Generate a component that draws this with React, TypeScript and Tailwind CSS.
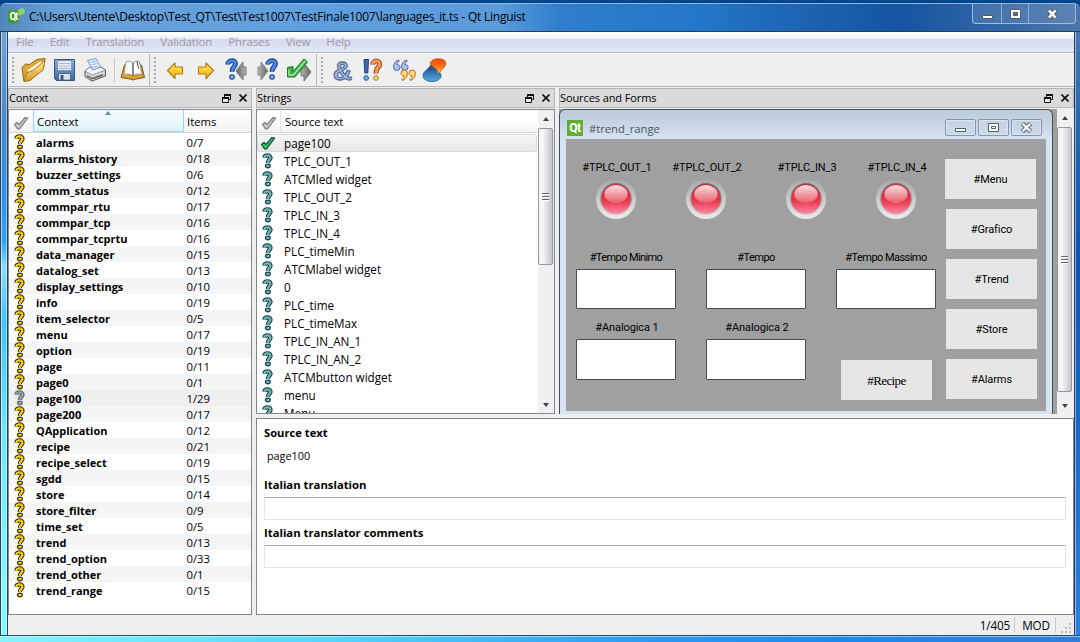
import React from "react";

type Kids = { children?: React.ReactNode };

const contexts: [string, string][] = [
  ["alarms", "0/7"], ["alarms_history", "0/18"], ["buzzer_settings", "0/6"], ["comm_status", "0/12"],
  ["commpar_rtu", "0/17"], ["commpar_tcp", "0/16"], ["commpar_tcprtu", "0/16"], ["data_manager", "0/15"],
  ["datalog_set", "0/13"], ["display_settings", "0/10"], ["info", "0/19"], ["item_selector", "0/5"],
  ["menu", "0/17"], ["option", "0/19"], ["page", "0/11"], ["page0", "0/1"], ["page100", "1/29"],
  ["page200", "0/17"], ["QApplication", "0/12"], ["recipe", "0/21"], ["recipe_select", "0/19"],
  ["sgdd", "0/15"], ["store", "0/14"], ["store_filter", "0/9"], ["time_set", "0/5"], ["trend", "0/13"],
  ["trend_option", "0/33"], ["trend_other", "0/1"], ["trend_range", "0/15"],
];

const strings = [
  "page100", "TPLC_OUT_1", "ATCMled widget", "TPLC_OUT_2", "TPLC_IN_3", "TPLC_IN_4", "PLC_timeMin",
  "ATCMlabel widget", "0", "PLC_time", "PLC_timeMax", "TPLC_IN_AN_1", "TPLC_IN_AN_2",
  "ATCMbutton widget", "menu", "Menu",
];

const hook = "M2.4 4.8C2.8 1.4 8.8 1.6 8.4 5C8.200 7 5.800 7 5.800 10";

function Question({ fill, edge }: { fill: string; edge: string }) {
  return (
    <svg width="12" height="16" viewBox="0 0 12 16" className="block shrink-0">
      <path d={hook} fill="none" stroke={edge} strokeWidth="4.4" />
      <ellipse cx="5.9" cy="13" rx="3" ry="2.400" fill={edge} />
      <path d={hook} fill="none" stroke={fill} strokeWidth="2.200" />
      <ellipse cx="5.9" cy="13" rx="1.900" ry="1.300" fill={fill} />
    </svg>
  );
}

function Tick({ fill, edge }: { fill: string; edge: string }) {
  return (
    <svg width="16" height="14" viewBox="0 0 16 14" className="block shrink-0">
      <path d="M1.5 8.5L4 6.5L6 8.7L12 1.5L14.6 2.2L6.5 12.8L4.5 12.8Z" fill={fill} stroke={edge} strokeWidth="1.2" strokeLinejoin="round" />
    </svg>
  );
}

function FloatIcon() {
  return (
    <svg width="9" height="9" viewBox="0 0 9 9" className="block">
      <path d="M2.5 3V.5h6v5H6.5" fill="none" stroke="#111" />
      <path d="M2 1h7" stroke="#111" strokeWidth="2" />
      <path d="M.5 4.5h6v4h-6z" fill="#eee" stroke="#111" />
      <path d="M0 4h7" stroke="#111" strokeWidth="2" />
    </svg>
  );
}

function CloseIcon() {
  return (
    <svg width="8" height="8" viewBox="0 0 8 8" className="block">
      <path d="M.5.5l7 7M7.5.5l-7 7" stroke="#111" strokeWidth="1.6" />
    </svg>
  );
}

function DockTitle({ title }: { title: string }) {
  return (
    <div className="flex h-[20px] shrink-0 items-center border border-[#b6b6b6] bg-[#dadada] pr-[4px] text-[11px] tracking-[-0.1px] text-black">
      <span className="flex-1">{title}</span>
      <span className="flex items-center gap-[8px]">
        <FloatIcon />
        <CloseIcon />
      </span>
    </div>
  );
}

function Grip() {
  return (
    <svg width="3" height="28" viewBox="0 0 3 28" className="block shrink-0">
      <path d="M1 1v26" stroke="#aaa" strokeWidth="2" strokeDasharray="2 2" />
    </svg>
  );
}

function Icon({ children }: Kids) {
  return (
    <svg width="26" height="26" viewBox="0 0 26 26" className="block shrink-0 overflow-visible">
      {children}
    </svg>
  );
}

const bigHook = "M3.8 7.5C4 2.400 12 2.600 11.500 7C11.200 9.800 8 9.600 8 14.800";

function BigQuestion({ x }: { x: number }) {
  return (
    <g transform={`translate(${x} 0)`}>
      <path d={bigHook} fill="none" stroke="#173a8c" strokeWidth="4.8" />
      <circle cx="8" cy="20" r="2.800" fill="#173a8c" />
      <path d={bigHook} fill="none" stroke="#4c8be6" strokeWidth="2.6" />
      <circle cx="8" cy="20" r="1.700" fill="#83baff" />
    </g>
  );
}

const wideArrow = "M0 10h3V5l7 9-7 9V18H0z";

const quoteDown = "M0 3.200a3.200 3.200 0 1 1 6.400 0c0 4-2 6.300-5 7.300l-.6-1.300c1.500-.8 2.300-1.800 2.400-3.200C1.200 6 0 4.800 0 3.200z";

function Defs() {
  return (
    <svg width="0" height="0" className="absolute">
      <defs>
        <linearGradient id="gold" x1="0" y1="0" x2="0" y2="1">
          <stop offset="0" stopColor="#ffe9a0" />
          <stop offset="1" stopColor="#d99a1e" />
        </linearGradient>
        <linearGradient id="amber" x1="0" y1="0" x2="0" y2="1">
          <stop offset="0" stopColor="#fff06c" />
          <stop offset="1" stopColor="#f8aa08" />
        </linearGradient>
        <linearGradient id="steel" x1="0" y1="0" x2="1" y2="0">
          <stop offset="0" stopColor="#b4b4b4" />
          <stop offset="1" stopColor="#666" />
        </linearGradient>
        <linearGradient id="steelBlue" x1="0" y1="0" x2="0" y2="1">
          <stop offset="0" stopColor="#8fb2dd" />
          <stop offset="1" stopColor="#3f6ba2" />
        </linearGradient>
        <linearGradient id="fire" x1="0" y1="0" x2="0" y2="1">
          <stop offset="0" stopColor="#f0470c" />
          <stop offset=".45" stopColor="#fb6a12" />
          <stop offset="1" stopColor="#ffd94e" />
        </linearGradient>
        <linearGradient id="water" x1="0" y1="0" x2="0" y2="1">
          <stop offset="0" stopColor="#183e77" />
          <stop offset="1" stopColor="#51a9e8" />
        </linearGradient>
        <linearGradient id="ring" x1="0" y1="0" x2="0" y2="1">
          <stop offset="0" stopColor="#a6a6a6" />
          <stop offset="1" stopColor="#ececec" />
        </linearGradient>
        <linearGradient id="bezel" x1="0" y1="0" x2="0" y2="1">
          <stop offset="0" stopColor="#6c6c6c" />
          <stop offset="1" stopColor="#d0d0d0" />
        </linearGradient>
        <linearGradient id="red" x1="0" y1="0" x2="0" y2="1">
          <stop offset="0" stopColor="#d81c28" />
          <stop offset=".55" stopColor="#e8364a" />
          <stop offset="1" stopColor="#ff88a4" />
        </linearGradient>
        <linearGradient id="shine" x1="0" y1="0" x2="0" y2="1">
          <stop offset="0" stopColor="#fbdcdc" />
          <stop offset="1" stopColor="#e8606c" />
        </linearGradient>
      </defs>
    </svg>
  );
}

function Toolbar() {
  return (
    <div className="flex h-[33px] shrink-0 items-stretch border-b border-[#b6b6b6] bg-[#efefef]">
      <div className="flex w-[142px] items-center border-r border-[#b8b8b8] pl-[4px]">
        <Grip />
        <div className="ml-[6px] flex items-center gap-[5px]">
          <Icon>
            <path d="M1 10.500L4.500 7l4 .5L16 2.500l8-1-1.500 10L9.500 23 3 24.500z" fill="#e0a732" stroke="#8c6414" strokeLinejoin="round" />
            <path d="M6 13L18.500 4.500l3-.5-1.500 7-12 8z" fill="#fff6d8" stroke="#b99a52" strokeWidth=".7" />
            <path d="M3 24.500L5.500 16l7-3L24 3.500 22 13 9.500 23z" fill="url(#gold)" stroke="#a97a1c" strokeLinejoin="round" />
          </Icon>
          <Icon>
            <path d="M2.5 2.500h20v21H4.500l-2-2z" fill="url(#steelBlue)" stroke="#34557f" strokeLinejoin="round" />
            <path d="M5.5 3.500h14v10h-14z" fill="#e2eaf4" stroke="#6f8db2" strokeWidth=".8" />
            <path d="M7 6.500h11M7 9h11M7 11.500h11" stroke="#a9bad0" />
            <path d="M6.5 16.500h12v6.500h-12z" fill="#dce2e8" stroke="#405d80" strokeWidth=".8" />
            <path d="M8.500 18h3v5h-3z" fill="#375b87" />
          </Icon>
          <Icon>
            <path d="M2 14l5-4 2.500 2 8-2.300 5 3.300v6L9 24l-7-4.500z" fill="#d4d4d4" stroke="#555" strokeLinejoin="round" />
            <path d="M2 14l7 4 13.500-5L17.500 10 10 12.500 7 10z" fill="#f6f6f6" stroke="#777" strokeWidth=".7" />
            <path d="M4.500 3.500L13 1.500l4.500 8.500-8 3z" fill="#e3f0ff" stroke="#6f9bd0" />
            <path d="M7 5.500l6-1.500M8 8l6-1.500M9 10.500l6-1.500" stroke="#8db6e6" />
            <path d="M4 18l5 2.800 11-3.800v2L9 22.500l-5-3z" fill="#666" />
          </Icon>
        </div>
        <span className="ml-[5px] h-[24px] w-px bg-[#c8c8c8]" />
        <div className="ml-[5px]">
          <Icon>
            <path d="M1 20.500L4.500 8h17l3 12.500-8.500 1.500-3 1-3-1z" fill="#dba02f" stroke="#7f5710" strokeLinejoin="round" />
            <path d="M4 17.500L6 5c3-1.500 5.500-.8 7 1v13c-2-2-5-2.200-9-1.500z" fill="#fafafa" stroke="#8d8d8d" strokeWidth=".8" />
            <path d="M22 17.500L19.500 5c-3-1.500-5-.8-6.500 1v13c2-2 5-2.200 9-1.500z" fill="#fff" stroke="#777" strokeWidth=".8" />
            <path d="M13 6v13" stroke="#555" />
            <path d="M17 4.500l1.500 7" stroke="#444" />
          </Icon>
        </div>
      </div>
      <div className="flex w-[167px] items-center border-r border-[#b8b8b8] pl-[4px]">
        <Grip />
        <div className="ml-[5px] flex items-center gap-[5px]">
          <Icon>
            <path d="M5.500 13.500L13 6v4h7.500v7H13v4.500z" fill="url(#amber)" stroke="#b67b12" strokeWidth="1.2" strokeLinejoin="round" />
          </Icon>
          <Icon>
            <path d="M20.500 13.500L13 6v4H5.500v7H13v4.500z" fill="url(#amber)" stroke="#b67b12" strokeWidth="1.2" strokeLinejoin="round" />
          </Icon>
          <Icon>
            <path d={wideArrow} transform="matrix(-1 0 0 1 22 0)" fill="url(#steel)" stroke="#777" />
            <BigQuestion x={0} />
          </Icon>
          <Icon>
            <path d={wideArrow} transform="translate(3 0)" fill="url(#steel)" stroke="#888" />
            <BigQuestion x={9} />
          </Icon>
          <Icon>
            <path d={wideArrow} transform="translate(15 1)" fill="url(#steel)" stroke="#777" />
            <path d="M1.500 10.500L1.500 20H9L21.500 5 18 2 7 14.500V9.500z" fill="#3fae49" stroke="#20772d" strokeLinejoin="round" />
            <path d="M3 12.500v5.500h4.500L19 4" fill="none" stroke="#a9e8a9" strokeWidth="1.3" />
          </Icon>
        </div>
      </div>
      <div className="flex items-center pl-[4px]">
        <Grip />
        <div className="ml-[5px] flex items-center gap-[5px]">
          <Icon>
            <text x="4" y="23" fontFamily="Liberation Sans, sans-serif" fontWeight="700" fontSize="26" textLength="19" lengthAdjust="spacingAndGlyphs" fill="#a7c0e6" stroke="#566f9d" strokeWidth="1.3">&amp;</text>
          </Icon>
          <Icon>
            <path d="M4 2.500h4.500L7.800 16H4.800z" fill="#3d6ab5" stroke="#243f86" />
            <circle cx="6.200" cy="21" r="2.300" fill="#5dbcf4" stroke="#28519a" />
            <path d="M12.500 7.500C13 2.800 20.500 3.200 19.800 7.500C19.300 10.500 16 10 16 16.500" fill="none" stroke="#a34c1c" strokeWidth="5" />
            <path d="M12.500 7.500C13 2.800 20.500 3.200 19.800 7.500C19.300 10.500 16 10 16 16" fill="none" stroke="#f5975a" strokeWidth="3" />
            <circle cx="16" cy="21" r="2.300" fill="#ffdc6a" stroke="#b47721" />
          </Icon>
          <Icon>
            <g fill="#adc6ec" stroke="#4a66a0">
              <path d={quoteDown} transform="matrix(-1 0 0 -1 9 13.500)" />
              <path d={quoteDown} transform="matrix(-1 0 0 -1 17 13.500)" />
            </g>
            <g fill="#ffd77c" stroke="#ae7420">
              <path d={quoteDown} transform="translate(10 13)" />
              <path d={quoteDown} transform="translate(18 13)" />
            </g>
          </Icon>
          <Icon>
            <path d="M1 18.500C1 14.500 6 13 9.500 7 12 12 19 14 19 19 19 22.500 14.500 24.500 10 24.500S1 22.500 1 18.500z" fill="url(#water)" stroke="#295688" strokeWidth=".8" />
            <path d="M8.500 5.500C10 1 20 .5 23 4c3 4-2.500 7.500-7 13C15.500 12 13 10.500 11 9.500 9 8.800 8 7.500 8.500 5.500z" fill="url(#fire)" stroke="#bd5613" strokeWidth=".8" />
          </Icon>
        </div>
      </div>
    </div>
  );
}

function ContextDock() {
  return (
    <section className="flex w-[244px] flex-col gap-px">
      <DockTitle title="Context" />
      <div className="flex flex-1 flex-col overflow-hidden border border-[#82868f] bg-white text-[11px] leading-[16px]">
        <div className="mb-px flex h-[23px] shrink-0 items-stretch border-b border-[#d5d5d5]">
          <div className="flex w-[24px] items-center bg-linear-to-b from-white to-[#f1f2f4] pl-[4px] pt-[3px]">
            <Tick fill="#c9c9c9" edge="#7d7d7d" />
          </div>
          <div className="relative flex w-[151px] items-center border-x border-b border-[#96d9f9] bg-linear-to-b from-[#f2f9fc] from-45% to-[#dcf1fa] pl-[3px] pt-[3px] text-[11.4px]">
            <svg width="6" height="4" viewBox="0 0 6 4" className="absolute left-[71px] top-[1px]">
              <path d="M0 4L3 0l3 4z" fill="#5a8fb0" />
            </svg>
            Context
          </div>
          <div className="flex flex-1 items-center bg-linear-to-b from-white to-[#f1f2f4] pl-[3px] pt-[2px] text-[11.3px]">Items</div>
        </div>
        {contexts.map(([name, items], i) => (
          <div
            key={name}
            className={`flex h-[16px] shrink-0 items-start ${name === "page100" ? "bg-[#efefef]" : i % 2 ? "bg-[#f5f5f5]" : "bg-white"}`}
          >
            <span className="ml-[5px] w-[22px]">
              <Question fill={name === "page100" ? "#8da0a0" : "#f4c61c"} edge={name === "page100" ? "#5d6c74" : "#3b3008"} />
            </span>
            <span className="w-[150.500px] pt-px font-bold">{name}</span>
            <span className="pt-px text-[11.3px] tracking-[-0.05px]">{items}</span>
          </div>
        ))}
      </div>
    </section>
  );
}

function Scrollbar({ thumb }: { thumb: string }) {
  return (
    <div className="flex w-[16px] shrink-0 flex-col items-center bg-[#f0f0f1]">
      <svg width="8" height="18" viewBox="0 0 8 18" className="block shrink-0">
        <path d="M1 11l3-4 3 4z" fill="#444" />
      </svg>
      <div className={`flex w-[15px] items-center justify-center self-start rounded-[2px] border border-[#95979b] bg-linear-to-r from-[#f6f6f6] from-30% to-[#c5c6cb] ${thumb}`}>
        <svg width="7" height="8" viewBox="0 0 7 8" className="block">
          <path d="M0 .5h7M0 3.5h7M0 6.5h7" stroke="#62656b" />
          <path d="M0 1.5h7M0 4.5h7M0 7.500h7" stroke="#fff" />
        </svg>
      </div>
      <div className="flex-1" />
      <svg width="8" height="14" viewBox="0 0 8 14" className="block shrink-0">
        <path d="M1 4l3 4 3-4z" fill="#444" />
      </svg>
    </div>
  );
}

function StringsDock() {
  return (
    <section className="flex w-[299px] flex-col gap-px">
      <DockTitle title="Strings" />
      <div className="flex flex-1 overflow-hidden border border-[#82868f] bg-white text-[11.700px]">
        <div className="flex h-[303px] flex-1 flex-col overflow-hidden pr-px">
          <div className="mb-px flex h-[23px] shrink-0 items-stretch border-b border-[#d5d5d5] bg-linear-to-b from-white from-50% to-[#f1f2f4]">
            <div className="flex w-[24px] items-center border-r border-[#e2e3e5] pl-[4px] pt-[3px]">
              <Tick fill="#c9c9c9" edge="#7d7d7d" />
            </div>
            <span className="self-center pl-[4px] pt-[2px] text-[11.300px] tracking-[-0.12px]">Source text</span>
          </div>
          {strings.map((s, i) => (
            <div
              key={s}
              className={`flex h-[18px] shrink-0 items-center ${i === 0 ? "rounded-[2px] border border-[#d9d9d9] bg-linear-to-b from-[#f8f8f8] to-[#e5e5e5]" : "border-x border-white"}`}
            >
              <span className={`w-[26px] shrink-0 ${i === 0 ? "pl-[2px]" : "pl-[4px]"}`}>
                {i === 0 ? <Tick fill="#2fd06a" edge="#12493b" /> : <Question fill="#6fb5b3" edge="#173d43" />}
              </span>
              <span className="whitespace-nowrap pt-px">{s}</span>
            </div>
          ))}
        </div>
        <Scrollbar thumb="h-[137px]" />
      </div>
    </section>
  );
}

function Led({ at }: { at: string }) {
  return (
    <svg width="40" height="40" viewBox="0 0 40 40" className={`absolute top-[40px] ${at}`}>
      <circle cx="20" cy="20" r="20" fill="url(#ring)" />
      <circle cx="20" cy="20" r="16" fill="url(#bezel)" />
      <circle cx="20" cy="20" r="14.800" fill="url(#red)" />
      <ellipse cx="20" cy="15" rx="11.700" ry="9" fill="url(#shine)" />
    </svg>
  );
}

function Label({ at, children }: Kids & { at: string }) {
  return <span className={`absolute w-[100px] whitespace-nowrap text-center leading-[14px] ${at}`}>{children}</span>;
}

function Field({ at }: { at: string }) {
  return <span className={`absolute h-[40px] w-[100px] rounded-[1px] border border-[#4a4a4a] bg-white ${at}`} />;
}

function FormButton({ at, children }: Kids & { at: string }) {
  return <span className={`absolute flex h-[40px] w-[91px] items-center justify-center bg-[#e6e6e6] pt-[2px] ${at}`}>{children}</span>;
}

function FormPreview() {
  return (
    <div className="flex h-[305px] w-[494px] shrink-0 flex-col rounded-t-[6px] border-x border-t border-[#484d54] bg-linear-to-b from-[#bccad9] to-[#d6e4f2] to-[30px] px-[6px]">
      <div className="flex h-[29px] shrink-0 items-center pt-[6px]">
        <span className="ml-px flex h-[16px] w-[16px] items-center justify-center bg-[#62ae32] font-['Roboto',sans-serif] text-[12px] font-bold tracking-[-0.5px] text-white">Qt</span>
        <span className="ml-[6px] flex-1 pt-[3px] text-[11.3px] tracking-[-0.05px] text-[#4b5663]">#trend_range</span>
        <div className="mr-[4px] flex gap-[2px]">
          {[0, 1, 2].map((n) => (
            <span key={n} className="flex h-[17px] w-[31px] items-center justify-center rounded-[2px] border border-[#8295b0] bg-linear-to-b from-[#c5d3e2] to-[#ccd9e8] ring-1 ring-inset ring-[#dbe5ef]">
              <svg width="13" height="11" viewBox="0 0 13 11">
                {n === 0 && <path d="M1.5 6.5h10v3h-10z" fill="#fff" stroke="#555c6b" />}
                {n === 1 && <path d="M1.5 1.5h10v8h-10zM4.5 4.5h4v2h-4z" fill="#fff" stroke="#555c6b" />}
                {n === 2 && (
                  <>
                    <path d="M2.500 1.500l8 8M10.500 1.500l-8 8" stroke="#555c6b" strokeWidth="4.400" />
                    <path d="M2.800 1.800l7.400 7.400M10.200 1.800l-7.400 7.400" stroke="#f7f7f7" strokeWidth="2.500" />
                  </>
                )}
              </svg>
            </span>
          ))}
        </div>
      </div>
      <div className="relative h-[272px] w-[480px] bg-[#a0a0a0] font-['Roboto','Liberation_Sans',sans-serif] text-[11px] tracking-[-0.1px] text-black">
        <Label at="left-px top-[22px]">#TPLC_OUT_1</Label>
        <Label at="left-[91px] top-[22px]">#TPLC_OUT_2</Label>
        <Label at="left-[191px] top-[22px]">#TPLC_IN_3</Label>
        <Label at="left-[281px] top-[22px]">#TPLC_IN_4</Label>
        <Led at="left-[30px]" />
        <Led at="left-[120px]" />
        <Led at="left-[220px]" />
        <Led at="left-[310px]" />
        <Label at="left-[10px] top-[112px] tracking-[-0.600px]">#Tempo Minimo</Label>
        <Label at="left-[140px] top-[112px] tracking-[-0.500px]">#Tempo</Label>
        <Label at="left-[270px] top-[112px] tracking-[-0.550px]">#Tempo Massimo</Label>
        <Field at="left-[10px] top-[130px]" />
        <Field at="left-[140px] top-[130px]" />
        <Field at="left-[270px] top-[130px]" />
        <Label at="left-[11px] top-[182px]">#Analogica 1</Label>
        <Label at="left-[141px] top-[182px]">#Analogica 2</Label>
        <Field at="left-[10px] top-[200px] h-[41px]" />
        <Field at="left-[140px] top-[200px] h-[41px]" />
        <FormButton at="left-[379px] top-[20px]">#Menu</FormButton>
        <FormButton at="left-[380px] top-[70px]">#Grafico</FormButton>
        <FormButton at="left-[380px] top-[120px]">#Trend</FormButton>
        <FormButton at="left-[380px] top-[170px]">#Store</FormButton>
        <FormButton at="left-[380px] top-[220px]">#Alarms</FormButton>
        <FormButton at="left-[275px] top-[221px] font-['Liberation_Serif',serif] text-[13px] tracking-[-0.600px]">#Recipe</FormButton>
      </div>
    </div>
  );
}

function CaptionButtons() {
  return (
    <div className="flex h-[20px] rounded-b-[4px] border border-t-0 border-[#9cbce0] bg-white/10">
      <span className="flex w-[29px] items-center justify-center border-r border-[#8db0da]">
        <svg width="13" height="12" viewBox="0 0 13 12"><path d="M1.5 7.5h10v3h-10z" fill="#fff" stroke="#545a68" /></svg>
      </span>
      <span className="flex w-[27px] items-center justify-center border-r border-[#8db0da]">
        <svg width="13" height="12" viewBox="0 0 13 12"><path fillRule="evenodd" d="M1.5 1.500h10v9h-10zM4.500 4.500v3h4v-3z" fill="#fff" stroke="#545a68" /></svg>
      </span>
      <span className="flex w-[46px] items-center justify-center">
        <svg width="13" height="12" viewBox="0 0 13 12">
          <path d="M2.500 2l7.500 8M10 2l-7.500 8" stroke="#545a68" strokeWidth="4.600" />
          <path d="M2.900 2.400l6.700 7.200M9.600 2.400L2.900 9.600" stroke="#fff" strokeWidth="2.600" />
        </svg>
      </span>
    </div>
  );
}

export default function App() {
  return (
    <div className="flex h-[642px] w-[1080px] flex-col overflow-hidden bg-[#04468c] font-['Open_Sans','Noto_Sans',sans-serif] text-[11px] text-black">
      <Defs />
      <div className="h-[3px] shrink-0 bg-[#04468c]" />
      <header className="flex h-[29px] shrink-0 items-start rounded-t-[6px] border-t border-b border-t-[#8fb6e0] border-b-[#1e3f68] bg-[linear-gradient(90deg,#4f86bd_0,#6aa2da_60px,#5f9fdf_330px,#5b9bdc_500px,#2e7ecb_560px,#2377c8_700px,#1d64b2_800px,#1454a3_900px,#3466a5_1000px,#4a76aa_1080px)]">
        <div className="flex h-[25px] flex-1 items-center pl-[8px]">
          <svg width="17" height="17" viewBox="0 0 17 17" className="block">
            <path d="M0 3l11-1v12L3 16l-3-3z" fill="#3d9b2c" />
            <path d="M10 3c2-4 7-3 7 0s-4 4-6 5z" fill="#8fd070" />
            <text x="1.500" y="12" fontFamily="Roboto, sans-serif" fontWeight="700" fontSize="10" fill="#fff" textLength="9">Qt</text>
          </svg>
          <span className="ml-[4px] whitespace-nowrap text-[12px] tracking-[-0.230px]">
            {"C:\\Users\\Utente\\Desktop\\Test_QT\\Test\\Test1007\\TestFinale1007\\languages_it.ts - Qt Linguist"}
          </span>
        </div>
        <div className="flex pr-[4px]">
          <CaptionButtons />
        </div>
      </header>

      <div className="flex min-h-0 flex-1">
        <div className="w-[8px] shrink-0 border-l border-r border-l-[#24425f] border-r-[#1d4470] bg-[linear-gradient(180deg,#6fa3d6_0px,#4b88c6_90px,#2f8fe8_160px,#2fa6f4_210px,#8fdcfb_235px,#3fc6f2_290px,#6fe6fa_400px,#84f6ff_560px)] shadow-[inset_1px_0_0_rgba(255,255,255,0.6),inset_-1px_0_0_rgba(255,255,255,0.45)]" />
        <div className="flex w-[1066px] flex-col bg-[#efefef]">
          <nav className="flex h-[21px] shrink-0 items-center gap-[16px] border-b border-[#aeb5cf] bg-[linear-gradient(180deg,#ffffff_0px,#ffffff_1px,#e9edf4_7px,#d3daed_7px,#e3e8f7_20px)] pl-[8px] text-[11.500px] text-[#9b9ba3]">
            {["File", "Edit", "Translation", "Validation", "Phrases", "View", "Help"].map((m) => (
              <span key={m} className="tracking-[-0.140px]">{m}</span>
            ))}
          </nav>
          <div className="h-px shrink-0 bg-white" />
          <Toolbar />
          <div className="mt-px flex min-h-0 flex-1 gap-[4px]">
            <ContextDock />
            <div className="flex flex-1 flex-col gap-[4px]">
              <div className="flex h-[326px] shrink-0 gap-[4px]">
                <StringsDock />
                <section className="flex flex-1 flex-col gap-px">
                  <DockTitle title="Sources and Forms" />
                  <div className="flex flex-1 overflow-hidden">
                    <div className="flex w-[498px] shrink-0 bg-[#a0a0a0]">
                      <FormPreview />
                    </div>
                    <div className="flex bg-[#f0f0f1] pr-px">
                      <Scrollbar thumb="h-[265px]" />
                    </div>
                  </div>
                </section>
              </div>
              <section className="flex flex-1 flex-col border border-[#82868f] bg-white pl-[7px] pr-[7px]">
                <h2 className="mt-[6px] text-[11.2px] font-bold leading-[16px]">Source text</h2>
                <p className="mt-[7px] pl-[3px] text-[10.8px] leading-[16px]">page100</p>
                <h2 className="mt-[13px] text-[11.3px] font-bold leading-[16px]">Italian translation</h2>
                <div className="mt-[4px] h-[23px] border border-[#e2e3ea] border-t-[#abadb3]" />
                <h2 className="mt-[5px] text-[11.300px] font-bold leading-[16px]">Italian translator comments</h2>
                <div className="mt-[4px] h-[23px] border border-[#e2e3ea] border-t-[#abadb3]" />
              </section>
            </div>
          </div>
          <footer className="flex h-[20px] shrink-0 items-center justify-end text-[11.700px] tracking-[-0.1px]">
            <span className="pr-[4px] pt-[2px]">1/405</span>
            <span className="h-[16px] w-px bg-[#c9c9c9]" />
            <span className="pl-[7px] pr-[5px] pt-[2px]">MOD</span>
            <span className="h-[16px] w-px bg-[#c9c9c9]" />
            <svg width="18" height="18" viewBox="0 0 18 18" className="block">
              <path d="M13 7h2v2h-2zM13 11h2v2h-2zM13 15h2v2h-2zM9 11h2v2H9zM9 15h2v2H9zM5 15h2v2H5z" fill="#bebebe" />
            </svg>
          </footer>
        </div>
        <div className="flex-1 border-l border-[#123f70] bg-[linear-gradient(180deg,#4a78ad,#2a66ab_100px,#0f57aa_220px,#1c6cc2_400px,#2c80d8)] shadow-[inset_1px_0_0_rgba(255,255,255,0.5)]" />
      </div>
      <div className="h-[7px] shrink-0 border-t border-[#244a78] bg-[linear-gradient(90deg,#86f4fc,#54d4fa_340px,#2f9af2_640px,#1f87ec_850px,#2f7fd8)] shadow-[inset_0_1px_0_rgba(255,255,255,0.5)]" />
    </div>
  );
}
